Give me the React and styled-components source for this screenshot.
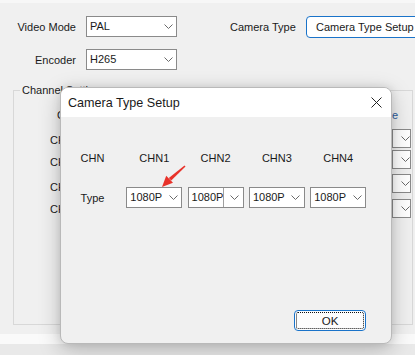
import React from "react";
import styled, { createGlobalStyle } from "styled-components";

const Global = createGlobalStyle`
  html, body { margin: 0; padding: 0; background: #f0f0f0; }
  body { font-family: "Liberation Sans", Arial, sans-serif; font-size: 11px; color: #1a1a1a; }
  #root { width: 415px; height: 355px; overflow: hidden; }
`;

const Page = styled.div`
  position: relative;
  width: 415px;
  height: 355px;
  overflow: hidden;
  background: #f0f0f0;
  display: flex;
  flex-direction: column;
`;

const TopStrip = styled.div`
  height: 3px;
  background: #f7f7f7;
`;

const Form = styled.div`
  display: grid;
  grid-template-columns: 76px 91px 1fr;
  column-gap: 10px;
  row-gap: 11px;
  padding: 13px 0 0 0;
`;

const Label = styled.div`
  display: flex;
  align-items: center;
  justify-content: flex-end;
  height: 21px;
  white-space: nowrap;
`;

const RightCell = styled.div`
  display: flex;
  align-items: center;
  padding-left: 43px;
  white-space: nowrap;
`;

const SideLabel = styled.span`
  width: 76px;
  flex: none;
`;

const SelectBox = styled.div`
  box-sizing: border-box;
  height: ${(p) => p.$h || 21}px;
  width: ${(p) => (p.$w ? p.$w + "px" : "auto")};
  background: #fff;
  border: 1px solid #8a8a8a;
  display: flex;
  align-items: center;
  padding-left: 3px;
  white-space: nowrap;
  overflow: hidden;
`;

const SelectText = styled.span`
  flex: 1;
  line-height: 1;
`;

const ArrowZone = styled.span`
  display: flex;
  align-items: center;
  justify-content: center;
  width: ${(p) => p.$w || 16}px;
  flex: none;
  align-self: stretch;
  border-left: 1px solid ${(p) => (p.$divider ? "#a0a0a0" : "transparent")};
`;

const Chevron = () => (
  <svg width="9" height="5" viewBox="0 0 9 5">
    <path d="M0.5 0.5 L4.5 4.5 L8.5 0.5" fill="none" stroke="#6a6a6a" strokeWidth="1" />
  </svg>
);

const Select = ({ value, w, h, divider, arrowW }) => (
  <SelectBox $w={w} $h={h}>
    <SelectText>{value}</SelectText>
    <ArrowZone $divider={divider} $w={arrowW}>
      <Chevron />
    </ArrowZone>
  </SelectBox>
);

const Button = styled.div`
  box-sizing: border-box;
  height: 22px;
  display: flex;
  align-items: center;
  background: #fff;
  border: 1px solid #1a73c9;
  border-radius: 4px;
  padding: 0 9px;
  white-space: nowrap;
`;

const GroupBox = styled.fieldset`
  margin: 15px 2px 0 13px;
  height: 240px;
  box-sizing: border-box;
  border: 1px solid #d8d8d8;
  padding: 0;
`;

const Legend = styled.legend`
  padding: 0 2px;
  margin-left: 6px;
  line-height: 10px;
  white-space: nowrap;
`;

const GroupGrid = styled.div`
  display: grid;
  grid-template-columns: 1fr 19px;
  grid-template-rows: 28px 21px 24px 25px 19px;
  padding: 6px 1px 0 36px;
`;

const GroupHead = styled.div`
  padding-left: 7px;
  display: flex;
  align-items: center;
`;

const GroupLabel = styled.div`
  display: flex;
  align-items: center;
  color: ${(p) => p.$color || "inherit"};
`;

const GroupSelect = styled.div`
  display: flex;
  align-items: flex-start;
`;

const Footer = styled.div`
  margin-top: 9px;
  height: 10px;
  background: #fafafa;
`;

const FooterBelow = styled.div`
  flex: 1;
  background: #e9e9e9;
`;

const Dialog = styled.div`
  position: absolute;
  left: 60px;
  top: 87px;
  width: 332px;
  height: 257px;
  box-sizing: border-box;
  border: 1px solid #b9b9b9;
  border-radius: 8px;
  background: #f0f0f0;
  box-shadow: 0 6px 22px rgba(0, 0, 0, 0.22), 0 0 8px rgba(0, 0, 0, 0.1);
  overflow: hidden;
  display: flex;
  flex-direction: column;
`;

const TitleBar = styled.div`
  height: 29px;
  background: #fff;
  display: flex;
  align-items: center;
  justify-content: space-between;
  padding: 0 9px 0 7px;
  font-size: 12.6px;
`;

const CloseIcon = () => (
  <svg width="11" height="11" viewBox="0 0 11 11">
    <path d="M0.5 0.5 L10.5 10.5 M10.5 0.5 L0.5 10.5" stroke="#222" strokeWidth="1" fill="none" />
  </svg>
);

const DialogBody = styled.div`
  flex: 1;
  display: flex;
  flex-direction: column;
  padding: 32px 0 0 3px;
`;

const ChanGrid = styled.div`
  display: grid;
  grid-template-columns: 57px repeat(4, 56px);
  column-gap: 5.3px;
  grid-template-rows: 17px 21px;
  row-gap: 21px;
`;

const Cell = styled.div`
  display: flex;
  align-items: center;
  justify-content: center;
`;

const DialogFooter = styled.div`
  margin-top: auto;
  display: flex;
  justify-content: flex-end;
  padding: 0 25px 12px 0;
`;

const OkButton = styled.div`
  box-sizing: border-box;
  width: 72px;
  height: 21px;
  background: #fdfdfd;
  border: 1px solid #1a73c9;
  border-radius: 4px;
  padding: 1px;
  display: flex;
`;

const OkInner = styled.div`
  flex: 1;
  border: 1px dotted #111;
  border-radius: 2px;
  display: flex;
  align-items: center;
  justify-content: center;
  font-size: 11.5px;
`;

const Annotation = styled.svg`
  position: absolute;
  left: 158px;
  top: 162px;
`;

const channels = ["CHN1", "CHN2", "CHN3", "CHN4"];

export default function App() {
  return (
    <Page>
      <Global />
      <TopStrip />
      <Form>
        <Label>Video Mode</Label>
        <Select value="PAL" />
        <RightCell>
          <SideLabel>Camera Type</SideLabel>
          <Button>Camera Type Setup</Button>
        </RightCell>
        <Label>Encoder</Label>
        <Select value="H265" />
        <div />
      </Form>
      <GroupBox>
        <Legend>Channel Setting</Legend>
        <GroupGrid>
          <GroupHead>CHN</GroupHead>
          <GroupLabel $color="#2b5c9c">e</GroupLabel>
          {channels.map((c) => (
            <React.Fragment key={c}>
              <GroupLabel>{c}</GroupLabel>
              <GroupSelect>
                <Select value="" w={19} h={19} arrowW={17} />
              </GroupSelect>
            </React.Fragment>
          ))}
        </GroupGrid>
      </GroupBox>
      <Footer />
      <FooterBelow />

      <Dialog>
        <TitleBar>
          <span>Camera Type Setup</span>
          <CloseIcon />
        </TitleBar>
        <DialogBody>
          <ChanGrid>
            <Cell>CHN</Cell>
            {channels.map((c) => (
              <Cell key={c}>{c}</Cell>
            ))}
            <Cell>Type</Cell>
            {channels.map((c, i) => (
              <Select key={c} value="1080P" divider={i === 1} arrowW={20} />
            ))}
          </ChanGrid>
          <DialogFooter>
            <OkButton>
              <OkInner>OK</OkInner>
            </OkButton>
          </DialogFooter>
        </DialogBody>
      </Dialog>

      <Annotation width="30" height="28" viewBox="0 0 30 28">
        <path d="M26.5 3.5 L27.5 4.6 L13.2 18.5 L10.8 16 Z" fill="#e8322a" />
        <path d="M4 25 L8.2 13.8 L15 20.8 Z" fill="#e8322a" />
      </Annotation>
    </Page>
  );
}
